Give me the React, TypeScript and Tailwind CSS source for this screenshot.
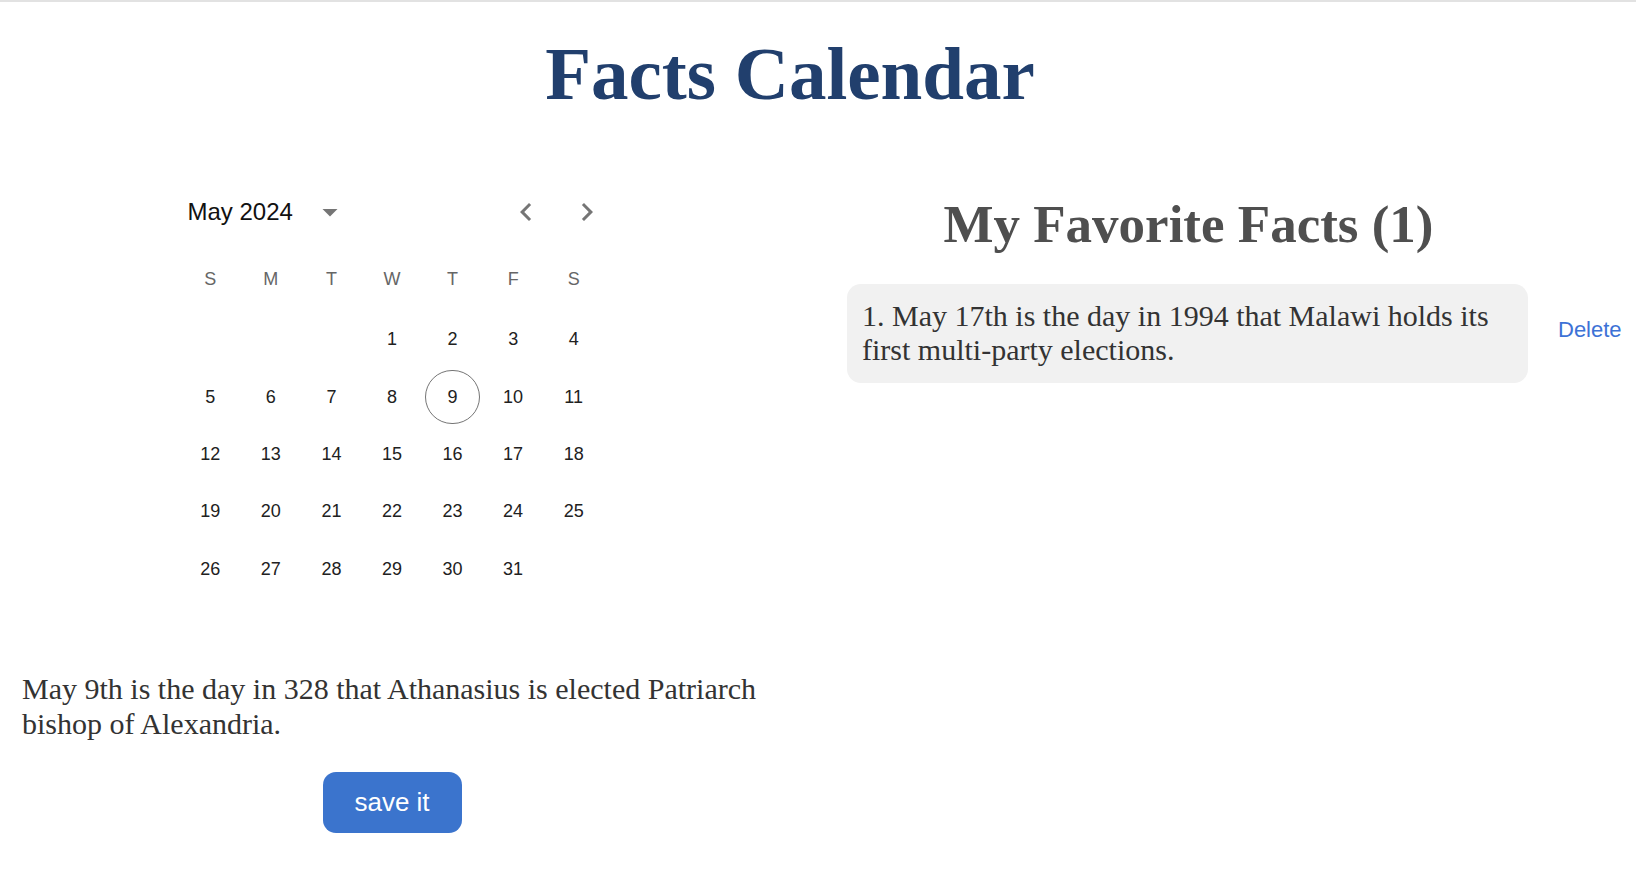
import React from "react";

const weekdays = ["S", "M", "T", "W", "T", "F", "S"];

// May 2024 starts on a Wednesday
const cells: (number | null)[] = [
  null,
  null,
  null,
  ...Array.from({ length: 31 }, (_, i) => i + 1),
];
const weeks: (number | null)[][] = [];
for (let i = 0; i < cells.length; i += 7) {
  const week = cells.slice(i, i + 7);
  while (week.length < 7) week.push(null);
  weeks.push(week);
}

function Calendar() {
  return (
    <div className="mx-auto mt-[72.5px] w-[480px] font-['Liberation_Sans',Arial,sans-serif]">
      <div className="flex h-[45px] items-center pl-[35.5px] pr-[27px]">
        <span className="text-[24px] leading-none text-[#111]">May 2024</span>
        <svg viewBox="0 0 24 24" className="ml-[19px] h-[36px] w-[36px] fill-[#757575]">
          <path d="M7 10l5 5 5-5z" />
        </svg>
        <div className="flex-1" />
        <svg viewBox="0 0 24 24" className="h-[36px] w-[36px] fill-[#757575]">
          <path d="M15.41 7.41 14 6l-6 6 6 6 1.41-1.41L10.83 12z" />
        </svg>
        <svg viewBox="0 0 24 24" className="ml-[25px] h-[36px] w-[36px] fill-[#757575]">
          <path d="M10 6 8.59 7.41 13.17 12l-4.58 4.59L10 18l6-6z" />
        </svg>
      </div>
      <div className="mx-auto mt-[14.5px] grid h-[60px] w-[424px] grid-cols-7 items-center text-center text-[18px] text-[#666]">
        {weekdays.map((d, i) => (
          <span key={i}>{d}</span>
        ))}
      </div>
      <div className="mx-auto mt-[2px] w-[424px]">
        {weeks.map((week, wi) => (
          <div key={wi} className="grid h-[57.4px] grid-cols-7 items-center">
            {week.map((day, di) => (
              <div key={di} className="flex items-center justify-center">
                {day === 9 ? (
                  <span className="flex h-[54.5px] w-[54.5px] items-center justify-center rounded-full border border-[#757575] text-[18px] text-[#212121]">
                    {day}
                  </span>
                ) : (
                  <span className="text-[18px] text-[#212121]">{day ?? ""}</span>
                )}
              </div>
            ))}
          </div>
        ))}
      </div>
    </div>
  );
}

export default function App() {
  return (
    <div className="min-h-screen border-t-2 border-[#e2e2e2] bg-white font-['Liberation_Serif','Times_New_Roman',serif]">
      <h1 className="pr-[56px] pt-[29px] text-center text-[75px] font-bold leading-[86px] text-[#213f6d]">
        Facts Calendar
      </h1>
      <div className="flex">
        <div className="w-[784px] px-[22px]">
          <Calendar />
          <p className="mt-[74.5px] text-[30px] leading-[34.5px] text-[#333]">
            May 9th is the day in 328 that Athanasius is elected Patriarch bishop of Alexandria.
          </p>
          <button className="mx-auto mt-[31px] block h-[61px] w-[139px] rounded-[13px] bg-[#3b74cd] font-['Liberation_Sans',Arial,sans-serif] text-[26px] text-white">
            save it
          </button>
        </div>
        <div className="flex-1 pl-[63px]">
          <h2 className="mt-[77px] w-[683px] text-center text-[53px] font-bold leading-[61px] text-[#4f4f4f]">
            My Favorite Facts (1)
          </h2>
          <div className="mt-[28.7px] flex items-center">
            <div className="w-[681px] rounded-[14px] bg-[#f1f1f1] px-[15px] py-[15px] text-[30px] leading-[34.5px] text-[#333]">
              1. May 17th is the day in 1994 that Malawi holds its first multi-party elections.
            </div>
            <button className="mb-[7px] ml-[30px] font-['Liberation_Sans',Arial,sans-serif] text-[22px] text-[#3d72d6]">
              Delete
            </button>
          </div>
        </div>
      </div>
    </div>
  );
}
